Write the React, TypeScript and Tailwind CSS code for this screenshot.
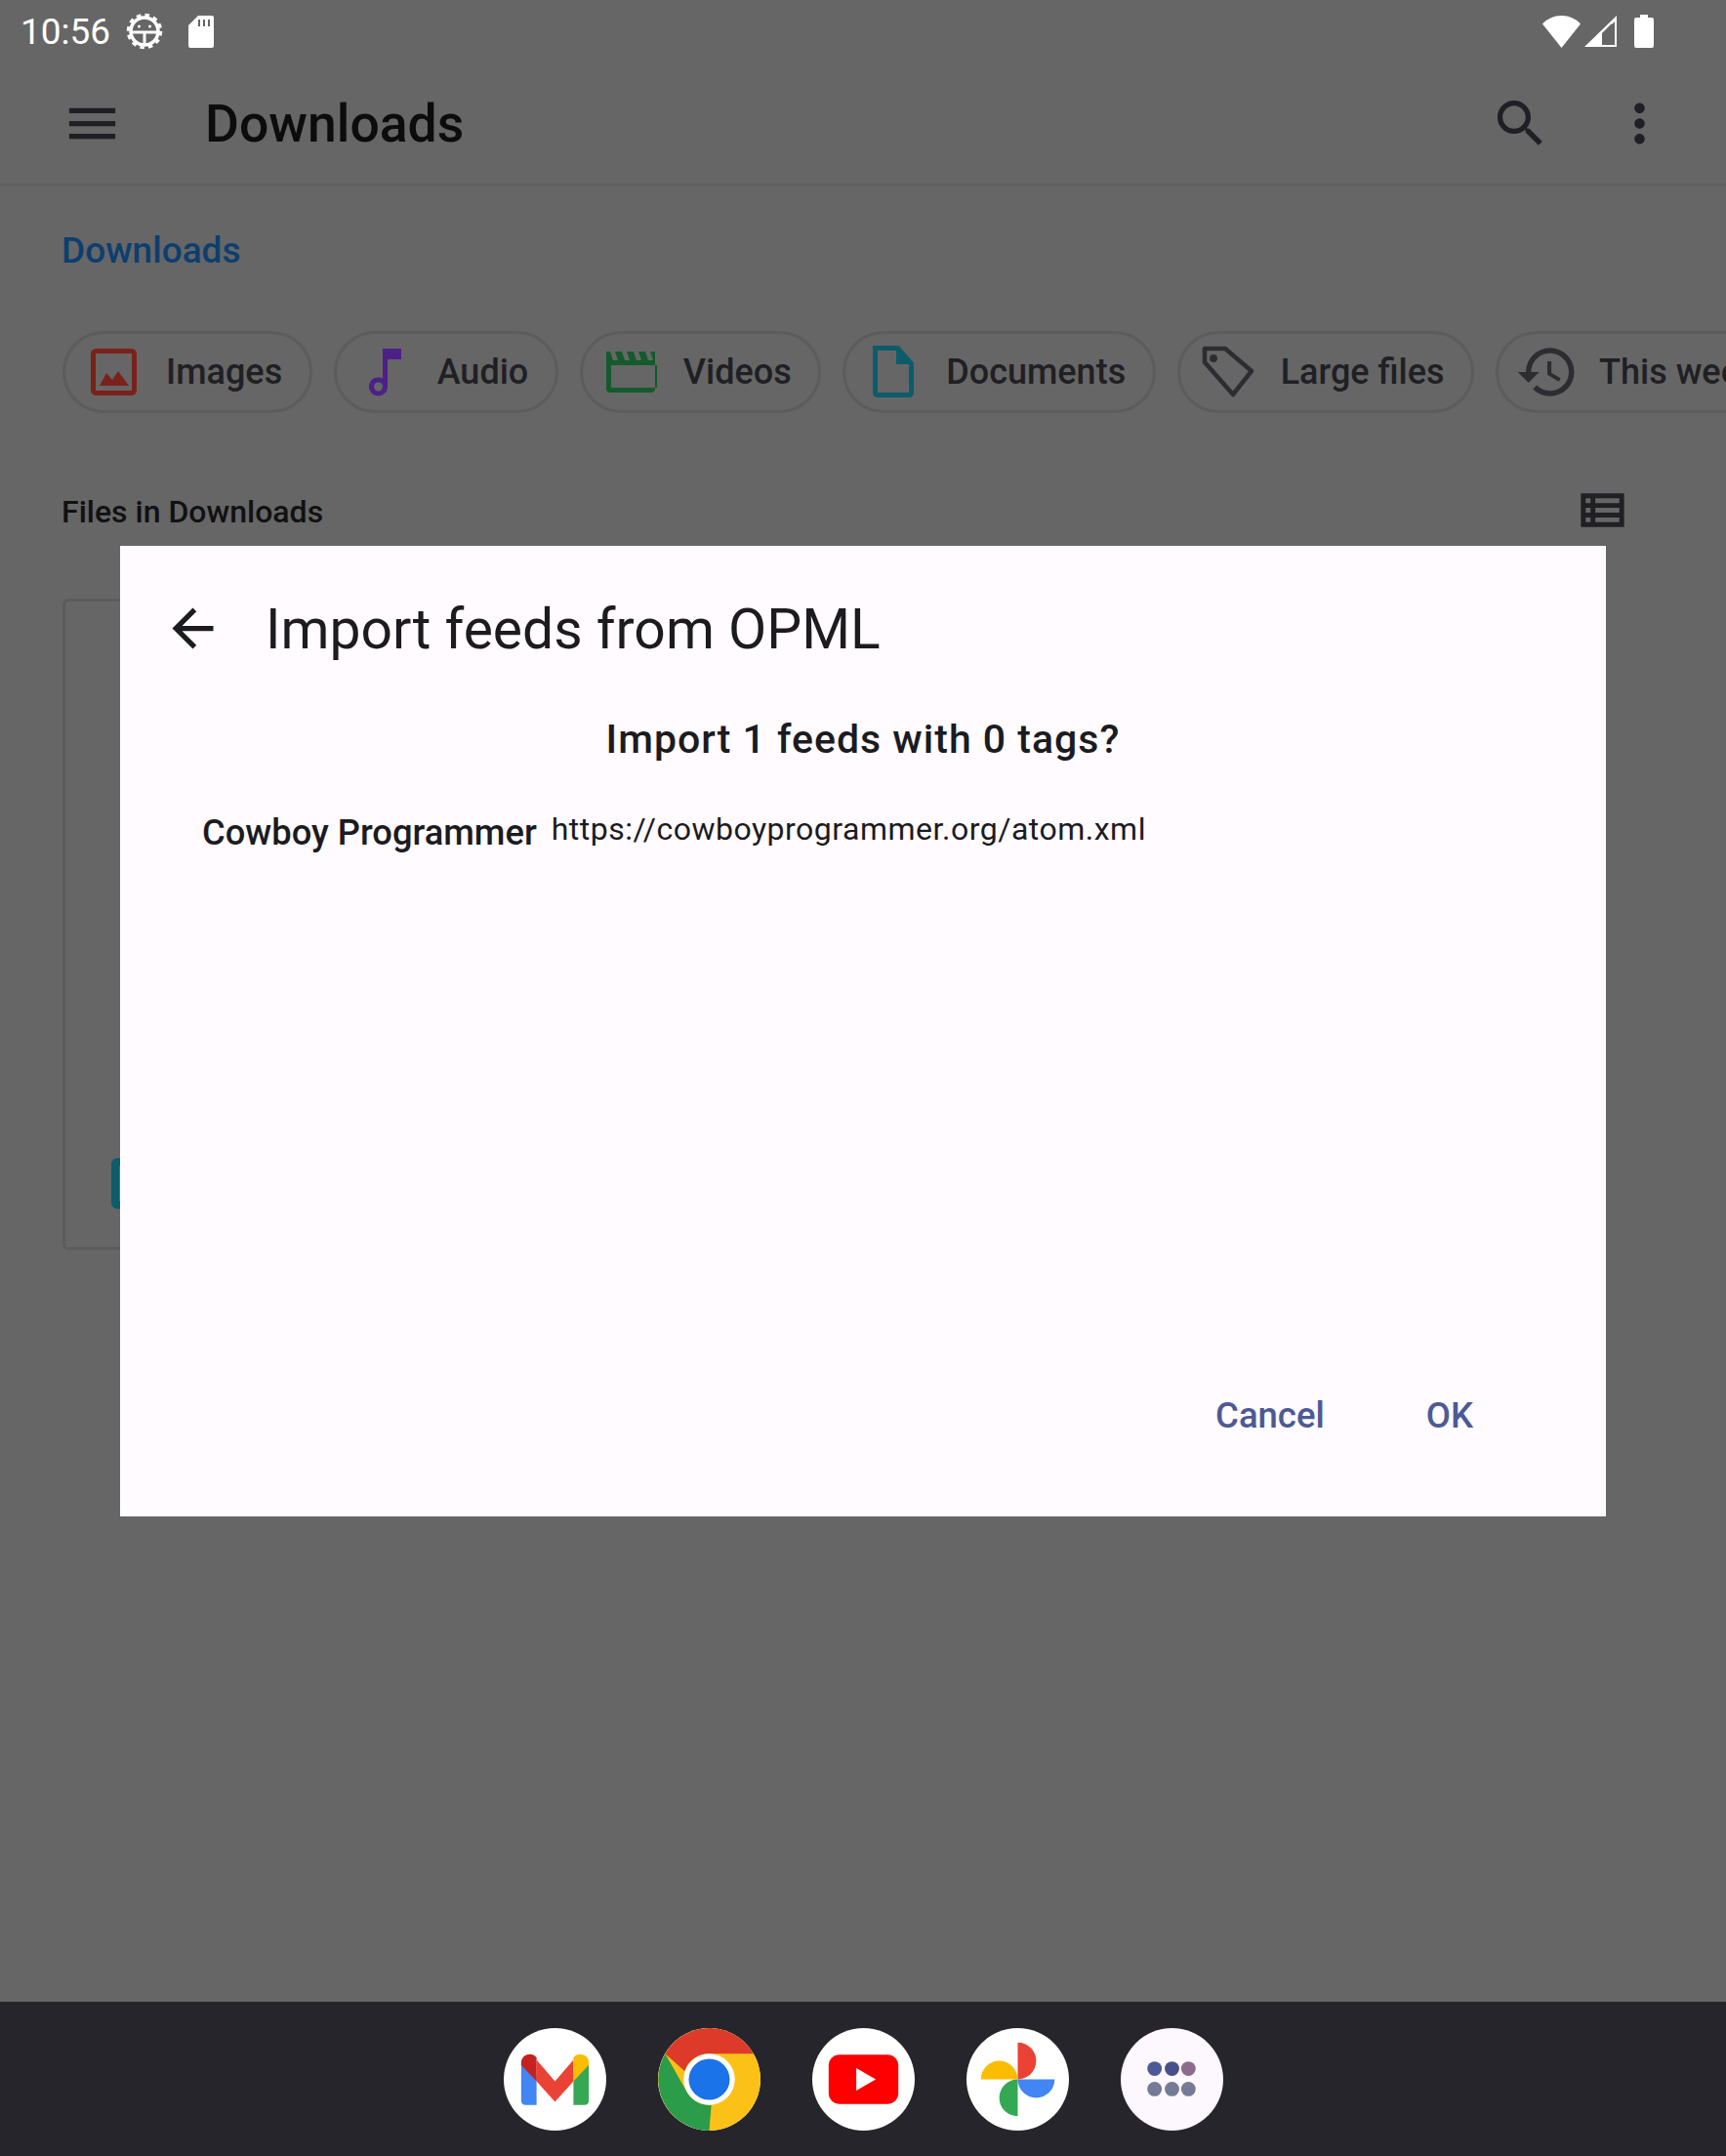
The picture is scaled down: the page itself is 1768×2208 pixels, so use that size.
const chips = [
  { label: 'Images', icon: <ImageIcon /> },
  { label: 'Audio', icon: <MusicIcon /> },
  { label: 'Videos', icon: <VideoIcon /> },
  { label: 'Documents', icon: <DocIcon /> },
  { label: 'Large files', icon: <TagIcon /> },
  { label: 'This week', icon: <HistoryIcon /> },
]

function ImageIcon() {
  return (
    <svg viewBox="0 0 66 66" className="w-[66px] h-[66px]">
      <rect x="11.5" y="11.5" width="42" height="43" rx="3" fill="none" stroke="#7b211b" strokeWidth="5" />
      <path d="M18 47l7-13 6 7 6-9 11 15z" fill="#7b211b" />
    </svg>
  )
}

function MusicIcon() {
  return (
    <svg viewBox="0 0 66 66" className="w-[66px] h-[66px]">
      <path d="M30 9h19v11H35v28a9.500 9.500 0 1 1-5-8.400zM25.500 43.500a4.500 4.500 0 1 0 0.100 0z" fill="#4c2087" fillRule="evenodd" />
    </svg>
  )
}

function VideoIcon() {
  return (
    <svg viewBox="0 0 66 66" className="w-[66px] h-[66px]">
      <path
        d="M7 12h4l3 9h5l-3-9h7l3 9h5l-3-9h7l3 9h5l-3-9h7l3 9h5l-3-9h5v38a4 4 0 0 1-4 4H11a4 4 0 0 1-4-4zM12 26v23h47V26z"
        fill="#155a2c"
        fillRule="evenodd"
      />
    </svg>
  )
}

function DocIcon() {
  return (
    <svg viewBox="0 0 66 66" className="w-[66px] h-[66px]">
      <path d="M13.500 8.500h23l14 16v30a2 2 0 0 1-2 2h-33a2 2 0 0 1-2-2z" fill="none" stroke="#0d5c6c" strokeWidth="5" />
      <path d="M35 8l16 17H35z" fill="#0d5c6c" />
    </svg>
  )
}

function TagIcon() {
  return (
    <svg viewBox="0 0 66 66" className="w-[66px] h-[66px]">
      <path d="M8 9h21l27 23-19 24-29-33z" fill="none" stroke="#2d2d31" strokeWidth="4.500" strokeLinejoin="round" />
      <circle cx="17" cy="19" r="4" fill="#2d2d31" />
    </svg>
  )
}

function HistoryIcon() {
  return (
    <svg viewBox="0 0 24 24" className="w-[66px] h-[66px]" fill="#2d2d31">
      <path d="M13 3a9 9 0 0 0-9 9H1l3.890 3.890.070.140L9 12H6c0-3.870 3.130-7 7-7s7 3.130 7 7-3.130 7-7 7c-1.930 0-3.680-.790-4.940-2.060l-1.420 1.420A8.954 8.954 0 0 0 13 21a9 9 0 0 0 0-18zm-1 5v5l4.280 2.540.720-1.210-3.500-2.080V8H12z" />
    </svg>
  )
}

function GmailIcon() {
  return (
    <svg viewBox="0 0 100 100" className="w-full h-full">
      <path d="M17 34v37a4 4 0 0 0 4 4h11V46z" fill="#4285f4" />
      <path d="M68 46v29h11a4 4 0 0 0 4-4V34z" fill="#34a853" />
      <path d="M32 31l18 21 18-21v21L50 72 32 52z" fill="#ea4335" />
      <path d="M17 34a8.500 8.500 0 0 1 15-5.500V52L17 36z" fill="#c5221f" />
      <path d="M68 28.500A8.500 8.500 0 0 1 83 34v2L68 52z" fill="#fbbc04" />
    </svg>
  )
}

function ChromeIcon() {
  return (
    <svg viewBox="0 0 100 100" className="w-full h-full">
      <circle cx="50" cy="50" r="50" fill="#fbc116" />
      <path d="M50 0a50 50 0 0 1 44 25H50a25 25 0 0 0-24 17L7 25A50 50 0 0 1 50 0z" fill="#dd3a2a" />
      <path d="M7 25l21 37a25 25 0 0 0 24 13L50 100A50 50 0 0 1 7 25z" fill="#2a9c4a" />
      <circle cx="50" cy="50" r="25" fill="#fff" />
      <circle cx="50" cy="50" r="20" fill="#1a73e8" />
    </svg>
  )
}

function YoutubeIcon() {
  return (
    <svg viewBox="0 0 100 100" className="w-full h-full">
      <rect x="16" y="26" width="68" height="48" rx="10" fill="#ff0000" />
      <path d="M43 39l19 11-19 11z" fill="#fff" />
    </svg>
  )
}

function PhotosIcon() {
  return (
    <svg viewBox="0 0 100 100" className="w-full h-full">
      <path d="M50 50V14a18 18 0 0 1 0 36z" fill="#ea4335" />
      <path d="M50 50H14a18 18 0 0 1 36 0z" fill="#fbbc04" />
      <path d="M50 50v36a18 18 0 0 1 0-36z" fill="#34a853" />
      <path d="M50 50h36a18 18 0 0 1-36 0z" fill="#4285f4" />
    </svg>
  )
}

function AppsIcon() {
  return (
    <svg viewBox="0 0 106 106" className="w-full h-full">
      <circle cx="35" cy="42" r="7.500" fill="#4d5a96" />
      <circle cx="53" cy="42" r="7.500" fill="#47508a" />
      <circle cx="70" cy="42" r="7.500" fill="#8c6c8c" />
      <circle cx="35" cy="63" r="7.500" fill="#757a96" />
      <circle cx="53" cy="63" r="7.500" fill="#757a96" />
      <circle cx="70" cy="63" r="7.500" fill="#757a96" />
    </svg>
  )
}

const dockApps = [
  { name: 'Gmail', icon: <GmailIcon />, bg: 'bg-white' },
  { name: 'Chrome', icon: <ChromeIcon />, bg: 'bg-white' },
  { name: 'YouTube', icon: <YoutubeIcon />, bg: 'bg-white' },
  { name: 'Photos', icon: <PhotosIcon />, bg: 'bg-white' },
  { name: 'Apps', icon: <AppsIcon />, bg: 'bg-[#fdf8fe]' },
]

export default function App() {
  return (
    <div className="relative w-[1768px] h-[2208px] overflow-hidden flex flex-col bg-[#666666] font-['Roboto',sans-serif]">
      {/* Status bar */}
      <div className="h-[64px] flex items-center text-white">
        <span className="ml-[21px] text-[37px] leading-none">10:56</span>
        <svg viewBox="0 0 38 38" className="ml-[16px] w-[38px] h-[38px]" fill="none" stroke="#fff">
          <circle cx="19" cy="19" r="14" strokeWidth="3.500" />
          <circle cx="19" cy="19" r="16.500" strokeWidth="3.500" strokeDasharray="4.500 4.140" />
          <path d="M6 20h26M19 20v13" strokeWidth="3" />
          <circle cx="13.500" cy="14" r="1.500" fill="#fff" stroke="none" />
          <circle cx="24.500" cy="14" r="1.500" fill="#fff" stroke="none" />
        </svg>
        <svg viewBox="0 0 26 33" className="ml-[26px] w-[26px] h-[33px]">
          <path d="M10 0h14a2 2 0 0 1 2 2v29a2 2 0 0 1-2 2H2a2 2 0 0 1-2-2V10z" fill="#fff" />
          <path d="M10 4h2v7h-2zM15 4h2v7h-2zM20 4h2v7h-2z" fill="#666" />
        </svg>
        <div className="flex-1" />
        <svg viewBox="0 0 39 33" className="w-[39px] h-[33px]">
          <path d="M0 8.500C5 3 12 0 19.500 0S34 3 39 8.500L19.500 33z" fill="#fff" />
        </svg>
        <svg viewBox="0 0 33 33" className="ml-[4px] w-[33px] h-[33px]">
          <path d="M33 0v32H0zM18 30h13V6L18 19z" fill="#fff" fillRule="evenodd" />
          <path d="M18 30V18L28 8v22z" fill="#666" />
        </svg>
        <svg viewBox="0 0 20 34" className="ml-[18px] mr-[74px] w-[20px] h-[34px]">
          <path d="M6 0h8v3h4a2 2 0 0 1 2 2v27a2 2 0 0 1-2 2H2a2 2 0 0 1-2-2V5a2 2 0 0 1 2-2h4z" fill="#fff" />
        </svg>
      </div>

      {/* App bar */}
      <div className="h-[126px] flex items-center border-b-2 border-[#5f5f5f]">
        <svg viewBox="0 0 24 24" className="ml-[63px] w-[63px] h-[63px]" fill="#1f1f24">
          <path d="M3 18h18v-2H3v2zm0-5h18v-2H3v2zm0-7v2h18V6H3z" />
        </svg>
        <h1 className="ml-[84px] pt-[2px] text-[53.500px] leading-none font-medium text-[#0c0c0d]">Downloads</h1>
        <div className="flex-1" />
        <svg viewBox="0 0 24 24" className="w-[63px] h-[63px] mr-[59px]" fill="#1f1f24">
          <path d="M15.500 14h-.790l-.280-.270C15.410 12.590 16 11.110 16 9.500 16 5.910 13.090 3 9.500 3S3 5.910 3 9.500 5.910 16 9.500 16c1.610 0 3.090-.590 4.230-1.570l.270.280v.790l5 4.990L20.490 19l-4.990-5zm-6 0C7.010 14 5 11.990 5 9.500S7.010 5 9.500 5 14 7.010 14 9.500 11.990 14 9.500 14z" />
        </svg>
        <svg viewBox="0 0 24 24" className="w-[63px] h-[63px] mr-[57px]" fill="#1f1f24">
          <path d="M12 8c1.100 0 2-.900 2-2s-.900-2-2-2-2 .900-2 2 .900 2 2 2zm0 2c-1.100 0-2 .900-2 2s.900 2 2 2 2-.900 2-2-.900-2-2-2zm0 6c-1.100 0-2 .900-2 2s.900 2 2 2 2-.900 2-2-.900-2-2-2z" />
        </svg>
      </div>

      {/* Page behind the dialog */}
      <div className="flex-1 pl-[63px] flex flex-col">
        <p className="mt-[45px] text-[37px] leading-[44px] font-medium text-[#0b3f6f]">Downloads</p>
        <div className="mt-[60px] ml-[1px] flex gap-[22px] whitespace-nowrap">
          {chips.map((chip) => (
            <div
              key={chip.label}
              className="h-[84px] shrink-0 flex items-center gap-[20px] pl-[17px] pr-[27.500px] rounded-[42px] border-[3px] border-[#5c5c5c] text-[36px] font-medium text-[#202024]"
            >
              {chip.icon}
              <span>{chip.label}</span>
            </div>
          ))}
        </div>
        <div className="mt-[76px] h-[50px] flex items-center justify-between pr-[97px]">
          <span className="text-[32px] font-medium text-[#111113]">Files in Downloads</span>
          <svg viewBox="0 0 24 24" className="w-[59px] h-[59px] -mt-[4px]" fill="#1f1f24">
            <path d="M3 5v14h18V5H3zm4 2v2H5V7h2zm-2 6v-2h2v2H5zm0 2h2v2H5v-2zm14 2H9v-2h10v2zm0-4H9v-2h10v2zm0-4H9V7h10v2z" />
          </svg>
        </div>
        <div className="mt-[64px] ml-[1px] w-[400px] h-[667px] rounded-[6px] border-[3px] border-[#5c5c5c] flex items-end pl-[47px] pb-[39px]">
          <div className="w-[36px] h-[52px] rounded-[6px] border-[8px] border-[#0d5c6c]" />
        </div>
      </div>

      {/* Dock */}
      <div className="h-[158px] bg-[#26252b] flex items-center justify-center gap-[53px]">
        {dockApps.map((app) => (
          <div key={app.name} className={`w-[105px] h-[105px] rounded-full overflow-hidden ${app.bg}`}>
            {app.icon}
          </div>
        ))}
      </div>

      {/* Dialog */}
      <div className="absolute left-[123px] top-[559px] w-[1522px] h-[994px] bg-[#fffbff] flex flex-col text-[#1c1b1f]">
        <div className="mt-[51px] flex items-center h-[66px]">
          <svg viewBox="0 0 24 24" className="ml-[43px] w-[63px] h-[63px]" fill="#1c1b1f">
            <path d="M20 11H7.830l5.590-5.590L12 4l-8 8 8 8 1.410-1.410L7.830 13H20v-2z" />
          </svg>
          <h2 className="ml-[43px] pt-[2px] text-[57px] leading-none">Import feeds from OPML</h2>
        </div>
        <p className="mt-[56px] text-center text-[41px] leading-[50px] font-medium tracking-[1px]">Import 1 feeds with 0 tags?</p>
        <div className="mt-[48px] ml-[84px] flex items-start">
          <span className="text-[36.300px] leading-[46px] font-medium">Cowboy Programmer</span>
          <span className="ml-[15px] -mt-[1px] text-[32px] leading-[40px] tracking-[0.500px]">https://cowboyprogrammer.org/atom.xml</span>
        </div>
        <div className="mt-auto mb-[80px] flex justify-end text-[36.500px] leading-[46px] font-medium text-[#4c5a96]">
          <span>Cancel</span>
          <span className="ml-[104px] mr-[136px]">OK</span>
        </div>
      </div>
    </div>
  )
}
